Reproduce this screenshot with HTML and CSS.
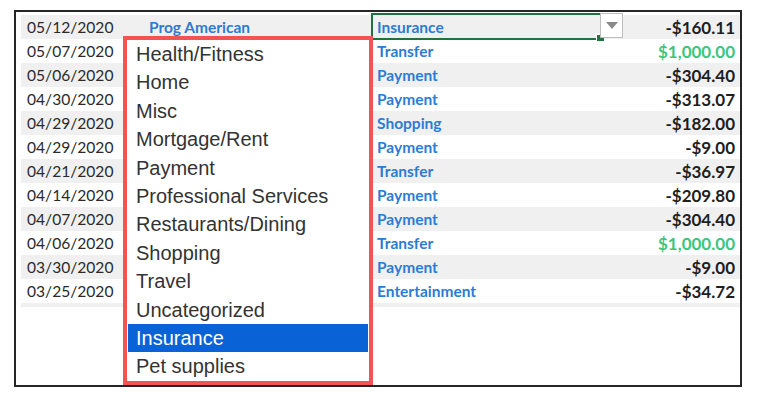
FILE: index.html
```html
<!DOCTYPE html>
<html>
<head>
<meta charset="utf-8">
<link rel="stylesheet" href="styles.css">
</head>
<body>
<div class="frame">
  <div class="sheet">
    <div class="row alt"><span class="date">05/12/2020</span><span class="desc">Prog American</span><span class="cat">Insurance</span><span class="amt">-$160.11</span></div>
    <div class="row"><span class="date">05/07/2020</span><span class="desc"></span><span class="cat">Transfer</span><span class="amt pos">$1,000.00</span></div>
    <div class="row alt"><span class="date">05/06/2020</span><span class="desc"></span><span class="cat">Payment</span><span class="amt">-$304.40</span></div>
    <div class="row"><span class="date">04/30/2020</span><span class="desc"></span><span class="cat">Payment</span><span class="amt">-$313.07</span></div>
    <div class="row alt"><span class="date">04/29/2020</span><span class="desc"></span><span class="cat">Shopping</span><span class="amt">-$182.00</span></div>
    <div class="row"><span class="date">04/29/2020</span><span class="desc"></span><span class="cat">Payment</span><span class="amt">-$9.00</span></div>
    <div class="row alt"><span class="date">04/21/2020</span><span class="desc"></span><span class="cat">Transfer</span><span class="amt">-$36.97</span></div>
    <div class="row"><span class="date">04/14/2020</span><span class="desc"></span><span class="cat">Payment</span><span class="amt">-$209.80</span></div>
    <div class="row alt"><span class="date">04/07/2020</span><span class="desc"></span><span class="cat">Payment</span><span class="amt">-$304.40</span></div>
    <div class="row"><span class="date">04/06/2020</span><span class="desc"></span><span class="cat">Transfer</span><span class="amt pos">$1,000.00</span></div>
    <div class="row alt"><span class="date">03/30/2020</span><span class="desc"></span><span class="cat">Payment</span><span class="amt">-$9.00</span></div>
    <div class="row"><span class="date">03/25/2020</span><span class="desc"></span><span class="cat">Entertainment</span><span class="amt">-$34.72</span></div>
    <div class="row alt stub"></div>
  </div>

  <div class="selection"><span class="handle"></span></div>
  <div class="dd-button"><span class="tri"></span></div>

  <ul class="menu">
    <li>Health/Fitness</li>
    <li>Home</li>
    <li>Misc</li>
    <li>Mortgage/Rent</li>
    <li>Payment</li>
    <li>Professional Services</li>
    <li>Restaurants/Dining</li>
    <li>Shopping</li>
    <li>Travel</li>
    <li>Uncategorized</li>
    <li class="active">Insurance</li>
    <li>Pet supplies</li>
  </ul>
</div>
</body>
</html>
```

FILE: styles.css
```css
html, body {
  margin: 0;
  padding: 0;
  background: #fff;
}

.frame {
  position: relative;
  box-sizing: border-box;
  margin: 10px 0 0 14px;
  width: 728px;
  height: 377px;
  border: 2px solid #262626;
  padding: 3px 0 0 5px;
  overflow: hidden;
}

.sheet {
  display: flex;
  flex-direction: column;
}

.row {
  display: grid;
  grid-template-columns: 103px 247px 1fr 130px;
  height: 24px;
  align-items: center;
  font-family: Lato, "Open Sans", sans-serif;
}

.row.alt {
  background: #f0f0f0;
}

.row.stub {
  height: 4px;
}

.date {
  padding-left: 6px;
  font-size: 15.6px;
  color: #2a2a2a;
}

.desc {
  padding-left: 25px;
  font-size: 15.5px;
  font-weight: 700;
  color: #2b7cd3;
  white-space: nowrap;
}

.cat {
  padding-left: 6px;
  font-size: 15.5px;
  font-weight: 700;
  color: #2b7cd3;
}

.amt {
  text-align: right;
  padding-right: 5px;
  font-size: 17px;
  font-weight: 700;
  color: #1e1e1e;
}

.amt.pos {
  color: #3cc57d;
}

.selection {
  position: absolute;
  left: 355px;
  top: 1px;
  width: 231px;
  height: 27px;
  box-sizing: border-box;
  border: 2px solid #1f7244;
}

.handle {
  position: absolute;
  right: -5px;
  bottom: -4px;
  width: 7px;
  height: 6px;
  background: #1f7244;
  border: 1px solid #fff;
}

.dd-button {
  position: absolute;
  left: 584px;
  top: 1px;
  width: 23px;
  height: 25px;
  box-sizing: border-box;
  border: 1px solid #bdbdbd;
  background: #fff;
  display: flex;
  align-items: center;
  justify-content: center;
}

.tri {
  width: 0;
  height: 0;
  border-left: 6px solid transparent;
  border-right: 6px solid transparent;
  border-top: 7px solid #8a8a8a;
}

.menu {
  position: absolute;
  left: 107px;
  top: 24px;
  width: 250px;
  box-sizing: border-box;
  margin: 0;
  padding: 0 1px;
  list-style: none;
  background: #fff;
  border: 4px solid #f25454;
  font-family: "Liberation Sans", Arial, sans-serif;
  font-size: 20px;
  color: #333;
}

.menu li {
  height: 28.4px;
  line-height: 28.4px;
  padding-left: 8px;
  white-space: nowrap;
}

.menu li.active {
  background: #0a63d6;
  color: #fff;
}
```
